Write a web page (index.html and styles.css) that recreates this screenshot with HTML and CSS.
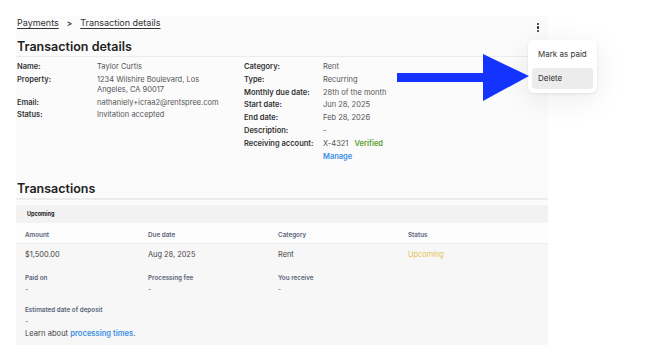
FILE: index.html
```html
<!DOCTYPE html>
<html lang="en">
<head>
    <meta charset="UTF-8">
    <meta name="viewport" content="width=device-width, initial-scale=1.0">
    <title>Transaction details</title>
    <link rel="stylesheet" href="styles.css">
</head>
<body>
    <div class="page">
        <div class="topbar">
            <nav class="breadcrumb">
                <a href="#">Payments</a>
                <span class="chevron">&gt;</span>
                <a href="#">Transaction details</a>
            </nav>
            <div class="kebab"><span></span><span></span><span></span></div>
        </div>

        <h1 class="section-title">Transaction details</h1>

        <div class="details">
            <div class="detail-col left">
                <div class="row"><div class="label">Name:</div><div class="value">Taylor Curtis</div></div>
                <div class="row"><div class="label">Property:</div><div class="value">1234 Wilshire Boulevard, Los<br>Angeles, CA 90017</div></div>
                <div class="row"><div class="label">Email:</div><div class="value">nathaniely+icraa2@rentspree.com</div></div>
                <div class="row"><div class="label">Status:</div><div class="value">Invitation accepted</div></div>
            </div>
            <div class="detail-col right">
                <div class="row"><div class="label">Category:</div><div class="value">Rent</div></div>
                <div class="row"><div class="label">Type:</div><div class="value">Recurring</div></div>
                <div class="row"><div class="label">Monthly due date:</div><div class="value">28th of the month</div></div>
                <div class="row"><div class="label">Start date:</div><div class="value">Jun 28, 2025</div></div>
                <div class="row"><div class="label">End date:</div><div class="value">Feb 28, 2026</div></div>
                <div class="row"><div class="label">Description:</div><div class="value">-</div></div>
                <div class="row"><div class="label">Receiving account:</div><div class="value">X-4321 <span class="verified">Verified</span></div></div>
                <div class="row"><div class="label"></div><div class="value"><a class="link" href="#">Manage</a></div></div>
            </div>
        </div>

        <h2 class="section-title tx-title">Transactions</h2>

        <div class="tx-table">
            <div class="tx-band">Upcoming</div>
            <div class="tx-head">
                <div>Amount</div>
                <div>Due date</div>
                <div>Category</div>
                <div>Status</div>
            </div>
            <div class="tx-body">
                <div class="tx-row main">
                    <div>$1,500.00</div>
                    <div>Aug 28, 2025</div>
                    <div>Rent</div>
                    <div class="status-upcoming">Upcoming</div>
                </div>
                <div class="tx-row">
                    <div><div class="sub-label">Paid on</div><div class="sub-value">-</div></div>
                    <div><div class="sub-label">Processing fee</div><div class="sub-value">-</div></div>
                    <div><div class="sub-label">You receive</div><div class="sub-value">-</div></div>
                </div>
                <div class="tx-extra">
                    <div class="sub-label">Estimated date of deposit</div>
                    <div class="sub-value">-</div>
                    <div class="learn">Learn about <a class="link" href="#">processing times</a>.</div>
                </div>
            </div>
        </div>
    </div>

    <!-- menu do kebab -->
    <div class="menu">
        <div class="menu-item">Mark as paid</div>
        <div class="menu-item active">Delete</div>
    </div>

    <!-- seta de anotação -->
    <svg class="arrow" width="132" height="48" viewBox="0 0 132 48">
        <polygon points="0,19 86,19 86,0 132,22 86,47 86,28 0,28" fill="#1433ff"/>
    </svg>
</body>
</html>
```

FILE: styles.css
```css
* {
    margin: 0;
    padding: 0;
    box-sizing: border-box;
}

body {
    background-color: #ffffff;
    color: #3a3a3a;
    font-family: Inter, "Noto Sans", sans-serif;
    padding: 16px;
}

.page {
    width: 532px;
    background-color: #fbfbfb;
}

.topbar {
    display: flex;
    justify-content: space-between;
    align-items: flex-start;
    height: 16px;
    padding: 1px 9px 0 1px;
}

.breadcrumb {
    display: flex;
    align-items: center;
    gap: 8px;
    font-size: 9px;
    line-height: 12px;
}

.breadcrumb a {
    color: #333;
    text-decoration: underline;
    text-underline-offset: 1.5px;
}

.chevron {
    font-size: 8px;
    font-weight: 700;
    color: #444;
}

.kebab {
    display: flex;
    flex-direction: column;
    gap: 1.3px;
    margin-top: 6px;
}

.kebab span {
    width: 2.2px;
    height: 2.2px;
    border-radius: 50%;
    background-color: #222;
}

.section-title {
    font-size: 12.5px;
    font-weight: 600;
    color: #222;
    padding: 7px 1px 1px;
    border-bottom: 1px solid #ececec;
    line-height: 16px;
}

.details {
    display: flex;
    padding: 5px 1px 0;
    font-size: 7.5px;
    line-height: 10px;
}

.detail-col {
    display: flex;
    flex-direction: column;
    gap: 2.8px;
}

.detail-col.left {
    width: 227px;
}

.row {
    display: flex;
}

.left .label {
    width: 80px;
}

.right .label {
    width: 79px;
}

.label {
    font-weight: 600;
    color: #333;
    flex-shrink: 0;
}

.value {
    color: #555;
}

.verified {
    color: #5aa02c;
    font-weight: 600;
    margin-left: 4px;
}

.link {
    color: #3a8ee6;
    font-weight: 600;
    text-decoration: none;
}

.tx-title {
    margin-top: 12px;
    border-bottom-width: 2px;
    padding-bottom: 1px;
}

.tx-table {
    margin-top: 5px;
}

.tx-band {
    height: 18px;
    background-color: #f2f2f2;
    font-size: 5.5px;
    font-weight: 700;
    color: #222;
    padding: 6px 11px 0;
}

.tx-head {
    display: grid;
    grid-template-columns: 123px 130px 130px 1fr;
    height: 21px;
    padding: 8px 9px 0;
    font-size: 6.3px;
    font-weight: 600;
    color: #5b6478;
    background-color: #fcfcfc;
    border-bottom: 1.5px solid #ececec;
}

.tx-body {
    background-color: #f7f7f7;
    padding: 6px 9px 6px;
}

.tx-row {
    display: grid;
    grid-template-columns: 123px 130px 130px 1fr;
}

.tx-row.main {
    font-size: 7.4px;
    line-height: 10px;
    color: #444;
    margin-bottom: 13px;
}

.status-upcoming {
    color: #e5bf4f;
}

.sub-label {
    font-size: 6.3px;
    font-weight: 600;
    color: #5b6478;
    line-height: 10px;
}

.sub-value {
    font-size: 7px;
    color: #666;
    line-height: 10px;
    margin-top: 2px;
}

.tx-extra {
    margin-top: 10px;
}

.learn {
    font-size: 7.6px;
    color: #444;
    line-height: 10px;
    margin-top: 2px;
}

.menu {
    position: absolute;
    top: 40px;
    left: 528px;
    width: 69px;
    background-color: #fff;
    border-radius: 6px;
    padding: 4px 4px;
    box-shadow: 0 1px 3px rgba(0,0,0,0.08), 0 6px 30px rgba(0,0,0,0.08);
    font-size: 8px;
    color: #333;
}

.menu-item {
    height: 21px;
    line-height: 21px;
    padding: 0 6px;
    border-radius: 4px;
    margin-bottom: 3px;
}

.menu-item:last-child {
    margin-bottom: 0;
}

.menu-item.active {
    background-color: #ececec;
}

.arrow {
    position: absolute;
    top: 54px;
    left: 397px;
}
```
